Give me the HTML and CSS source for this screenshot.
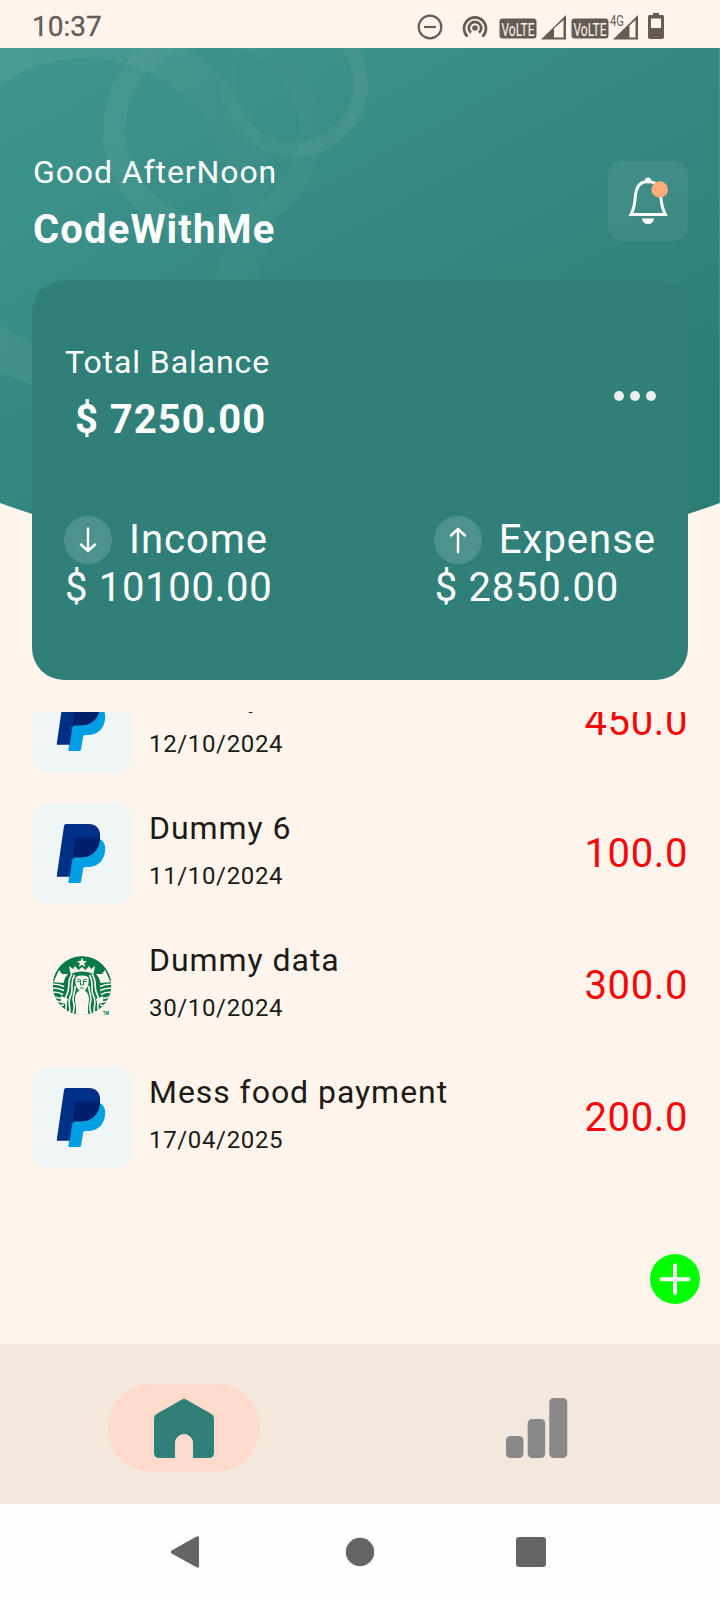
FILE: index.html
```html
<!DOCTYPE html>
<html lang="en">
<head>
<meta charset="utf-8">
<title>Expense Tracker</title>
<link rel="stylesheet" href="styles.css">
</head>
<body>
<svg width="0" height="0" class="defs">
  <symbol id="paypal" viewBox="0 0 100 100">
    <path fill="#009fe3" d="M68.500 35.500C72 37.500 74 42 73 48C71.500 57.500 65 63 56 63H53Q51.500 63 51.200 64.500L49 77.500Q48.800 79 47.500 79H37.300Q36.100 79 36.300 77.800L43 36Z"/>
    <path fill="#002f87" d="M34 20H56.500C65 20 69 25.500 68 34.500C67 46 60 53.300 49 53.300H43Q40.700 53.300 40.300 55.500L37.700 72.700H25.500Q24.600 72.700 24.800 71.500L32 22Q32.300 20 34 20Z"/>
    <path fill="#001f6b" d="M44.500 33.800H68.100C67.500 46 60 53.300 49 53.300H43Q40.700 53.300 40.300 55.500L43 36Q43.300 33.800 44.500 33.800Z"/>
  </symbol>
</svg>
<div class="phone">
  <header class="status">
    <span class="clock">10:37</span>
    <svg class="status-icons" width="260" height="48" viewBox="410 0 260 48">
      <g fill="none" stroke="#645c55" stroke-width="2.200">
        <circle cx="430" cy="27" r="11.300"/><path d="M424 27H436"/>
        <path stroke-width="2.700" d="M467.500 36.500A11 11 0 1 1 482.500 36.500M471 32.800A6.200 6.200 0 1 1 479 32.800"/>
      </g>
      <g fill="#645c55">
        <circle cx="475" cy="28" r="2.800"/>
        <rect x="499.500" y="18.500" width="37" height="20" rx="3"/>
        <rect x="571.500" y="18.500" width="37" height="20" rx="3"/>
        <path fill-rule="evenodd" d="M541 39.500L566 15V39.500ZM554 28.500V37.500H563.500V20Z"/>
        <path fill-rule="evenodd" d="M613 39.500L638 15V39.500ZM629.500 25.500V37.500H635.500V20Z"/>
        <path fill-rule="evenodd" d="M653 13H659V15H662.500Q664 15 664 16.500V37Q664 39 662 39H650Q648 39 648 37V16.500Q648 15 649.500 15H653ZM651 18.500V28H661V18.500Z"/>
      </g>
      <g class="volte"><text x="501.500" y="35.500" textLength="33" lengthAdjust="spacingAndGlyphs">VoLTE</text><text x="573.500" y="35.500" textLength="33" lengthAdjust="spacingAndGlyphs">VoLTE</text></g>
      <text class="net" x="610" y="26" textLength="14" lengthAdjust="spacingAndGlyphs">4G</text>
    </svg>
  </header>

  <main class="screen">
    <svg class="backdrop" width="720" height="540" viewBox="0 48 720 540">
      <defs>
        <linearGradient id="bg" gradientUnits="userSpaceOnUse" x1="150" y1="10" x2="440" y2="540"><stop offset="0" stop-color="#3f958e"/><stop offset="1" stop-color="#2c7d76"/></linearGradient>
        <linearGradient id="r1" gradientUnits="userSpaceOnUse" x1="0" y1="150" x2="270" y2="200"><stop offset="0" stop-color="#fff" stop-opacity=".055"/><stop offset="1" stop-color="#fff" stop-opacity=".012"/></linearGradient>
        <linearGradient id="r2" gradientUnits="userSpaceOnUse" x1="120" y1="190" x2="310" y2="90"><stop offset="0" stop-color="#fff" stop-opacity=".045"/><stop offset="1" stop-color="#fff" stop-opacity=".012"/></linearGradient>
        <linearGradient id="r3" gradientUnits="userSpaceOnUse" x1="360" y1="130" x2="225" y2="60"><stop offset="0" stop-color="#fff" stop-opacity=".06"/><stop offset="1" stop-color="#fff" stop-opacity=".005"/></linearGradient>
        <clipPath id="shape"><path d="M0 48H720V503Q360 633 0 503Z"/></clipPath>
      </defs>
      <g clip-path="url(#shape)">
        <path fill="url(#bg)" d="M0 48H720V600H0Z"/>
        <g fill="none">
          <circle cx="85" cy="205" r="167" stroke="url(#r1)" stroke-width="40"/>
          <circle cx="212" cy="130" r="98" stroke="url(#r2)" stroke-width="22"/>
          <circle cx="294" cy="83" r="66.500" stroke="url(#r3)" stroke-width="15"/>
        </g>
        <path fill="#fff" fill-opacity=".12" d="M719 48H720V504H719Z"/>
      </g>
    </svg>

    <section class="greeting">
      <div class="stack"><p class="label">Good AfterNoon</p><p class="strong name">CodeWithMe</p></div>
      <div class="bell">
        <svg width="80" height="80" viewBox="0 0 80 80">
          <g fill="none" stroke="#fff" stroke-width="3"><path d="M23 53.500C27 46 26.500 42 27.500 34C28.500 25 33 20.500 40 20.500S51.500 25 52.500 34C53.500 42 53.500 46 57.300 53.500Z"/></g>
          <circle cx="40" cy="19.500" r="3" fill="#fff"/>
          <path fill="#fff" d="M34 57.500H46C45.500 61 43.500 63 40 63S34.500 61 34 57.500Z"/>
          <circle cx="51.700" cy="28.500" r="8.300" fill="#ffab7b"/>
        </svg>
      </div>
    </section>

    <section class="card">
      <div class="balance">
        <div class="stack"><p class="label">Total Balance</p><p class="strong pre"> $ 7250.00</p></div>
        <div class="dots"><i></i><i></i><i></i></div>
      </div>
      <div class="totals">
        <div>
          <div class="kind income"><span class="round"><svg width="48" height="48" viewBox="0 0 48 48"><path d="M24 12.500V35M17 28.500L24 35L31 28.500"/></svg></span>Income</div>
          <p class="sum">$ 10100.00</p>
        </div>
        <div>
          <div class="kind"><span class="round"><svg width="48" height="48" viewBox="0 0 48 48"><path d="M24 36V13M17 19.500L24 13L31 19.500"/></svg></span>Expense</div>
          <p class="sum">$ 2850.00</p>
        </div>
      </div>
    </section>

    <section class="list">
      <div class="rows">
        <div class="row"><svg class="tile" width="100" height="100"><use href="#paypal"/></svg><div class="info"><p class="title">Dummy 5</p><p class="date">12/10/2024</p></div><span class="amount">450.0</span></div>
        <div class="row"><svg class="tile" width="100" height="100"><use href="#paypal"/></svg><div class="info"><p class="title">Dummy 6</p><p class="date">11/10/2024</p></div><span class="amount">100.0</span></div>
        <div class="row">
          <svg class="tile plain" width="100" height="100" viewBox="0 0 100 100">
            <defs><clipPath id="seal"><circle cx="50" cy="49.500" r="29.500"/></clipPath></defs>
            <g clip-path="url(#seal)">
              <circle cx="50" cy="49.500" r="29.500" fill="#0a7a48"/>
              <g fill="#fff5ed">
                <path d="M50 21.500L51.400 25H55L52.200 27.300L53.200 31L50 28.800L46.800 31L47.800 27.300L45 25H48.600Z"/>
                <path d="M37 30L41 33L43 30L46.500 34L50 31L53.500 34L57 30L59 33L63 30L61.500 38C55 34.500 45 34.500 38.500 38Z"/>
                <path d="M22 45L27 34L30 38H36L33 42L31.500 47L20 46ZM78 45L73 34L70 38H64L67 42L68.500 47L80 46Z"/>
                <path d="M43 80C45.500 73 43 68 43 63C43 58 46 54 50 53.500C54 54 57 58 57 63C57 68 54.500 73 57 80Z"/>
                <path d="M43.500 42C44 38.500 56 38.500 56.500 42C57.500 50 54 55 50 55.500C46 55 42.500 50 43.500 42Z"/>
                <path d="M29 60L36 63L34.500 68L29 67ZM71 60L64 63L65.500 68L71 67Z"/>
              </g>
              <g fill="none" stroke="#fff5ed" stroke-width="1.600">
                <path d="M42.500 39C37 48 42.500 53 38.500 60S40 71 37 80M40 38C34 47 39 51 35 58S37 70 32.500 78M43 50C44 56 39.500 60 41.500 66S41.500 73 40.500 80"/>
                <path d="M57.500 39C63 48 57.500 53 61.500 60S60 71 63 80M60 38C66 47 61 51 65 58S63 70 67.500 78M57 50C56 56 60.500 60 58.500 66S58.500 73 59.500 80"/>
                <path d="M20 48Q27 48 32 50.500M20 52Q27 52 32 54.500M21 56Q27 56 31 58.500M22 61L29 62.500M23 65L30 66M26 70L32 69M80 48Q73 48 68 50.500M80 52Q73 52 68 54.500M79 56Q73 56 69 58.500M78 61L71 62.500M77 65L70 66M74 70L68 69"/>
              </g>
              <path fill="none" stroke="#0a7a48" stroke-width=".9" d="M45 43.500Q47 42.500 48.500 44V49H51.500V44Q53 42.500 55 43.500M45 45.500H48M52 45.500H55M48 52H52"/>
            </g>
            <text class="tm" x="71" y="79" textLength="6" lengthAdjust="spacingAndGlyphs">TM</text>
          </svg>
          <div class="info"><p class="title">Dummy data</p><p class="date">30/10/2024</p></div><span class="amount">300.0</span>
        </div>
        <div class="row"><svg class="tile" width="100" height="100"><use href="#paypal"/></svg><div class="info"><p class="title">Mess food payment</p><p class="date">17/04/2025</p></div><span class="amount">200.0</span></div>
      </div>
    </section>
    <svg class="fab" width="50" height="50" viewBox="0 0 50 50"><circle cx="25" cy="25" r="25" fill="#0f0"/><path d="M25 11.500V39M11.500 25.300H38.500" stroke="#fff" stroke-width="4" stroke-linecap="round"/></svg>
  </main>

  <nav class="tabs">
    <div class="tab active"><svg width="60" height="60" viewBox="0 0 60 60"><path fill="#307f79" d="M28 1.500Q30 .2 32 1.500L57.500 16Q60 17.500 60 20.500V54.500Q60 60 54.500 60H39V45A9 9 0 0 0 21 45V60H5.500Q0 60 0 54.500V20.500Q0 17.500 2.500 16Z"/></svg></div>
    <div class="tab chart"><svg width="62" height="60" viewBox="0 0 62 60" fill="#898989"><rect y="38" width="17.500" height="22" rx="4.500"/><rect x="21.700" y="21" width="17.500" height="39" rx="4.500"/><rect x="43.300" width="18" height="60" rx="4.500"/></svg></div>
  </nav>
  <footer class="system">
    <svg width="720" height="96" viewBox="0 1504 720 96" fill="#656565"><path d="M171.600 1550.500L196.500 1536.500Q199 1535.300 199 1538V1566Q199 1568.500 196.500 1567.300L171.600 1553.500Q170 1552 171.600 1550.500Z"/><circle cx="360" cy="1552" r="14.200"/><rect x="516" y="1537" width="30" height="30" rx="3"/></svg>
  </footer>
</div>
</body>
</html>
```

FILE: styles.css
```css
* { box-sizing: border-box; }
body { margin: 0; font-family: Roboto, sans-serif; letter-spacing: 1px; color: #201a17; background: #fff5ed; }
p { margin: 0; }
svg { display: block; }
.defs { position: absolute; }
.phone { width: 720px; height: 1600px; display: flex; flex-direction: column; overflow: hidden; }
.status { height: 48px; padding-left: 32px; padding-right: 50px; display: flex; justify-content: space-between; align-items: center; color: #645c55; }
.clock { font-size: 28px; letter-spacing: 0; line-height: 54px; padding-top: 6px; -webkit-text-stroke: .3px #645c55; }
.volte { fill: #fff5ed; font-size: 18px; letter-spacing: 0; }
.net { fill: #645c55; font-size: 14px; letter-spacing: 0; }

.screen { position: relative; height: 1296px; display: flex; flex-direction: column; }
.backdrop { position: absolute; top: 0; left: 0; z-index: -1; }
.greeting { height: 232px; padding: 100px 32px 0 33px; display: flex; justify-content: space-between; color: #fff; }
.stack { display: flex; flex-direction: column; gap: 10px; }
.label { font-size: 32px; line-height: 48px; letter-spacing: .9px; }
.strong { font-size: 40px; line-height: 48px; font-weight: 700; }
.name { letter-spacing: 1.15px; }
.pre { white-space: pre; margin-left: -1px; }
.bell { width: 80px; height: 80px; margin-top: 13px; border-radius: 14px; background: rgba(255,255,255,.06); }

.card { height: 400px; margin: 0 32px; padding: 58px 32px 0; border-radius: 32px; background: #307f79; color: #fff; }
.balance { display: flex; justify-content: space-between; padding-left: 1px; }
.dots { display: flex; gap: 6px; padding-top: 53px; }
.dots i { width: 10px; height: 10px; border-radius: 50%; background: #eee; }
.totals { display: flex; justify-content: space-between; margin-top: 72px; font-size: 40px; line-height: 48px; }
.kind { display: flex; gap: 17px; }
.sum { letter-spacing: .7px; padding-left: 1px; }
.round { width: 48px; height: 48px; border-radius: 50%; background: rgba(255,255,255,.15); }
.round path { fill: none; stroke: #fff; stroke-width: 2.4; stroke-linecap: round; stroke-linejoin: round; }

.list { height: 632px; margin-top: 32px; overflow: hidden; }
.rows { display: flex; flex-direction: column; gap: 32px; margin-top: -40px; padding: 0 32px; }
.row { display: flex; align-items: center; height: 100px; }
.tile { border-radius: 16px; background: #f0f6f5; }
.plain { background: none; }
.tm { font-size: 5px; font-weight: 700; letter-spacing: 0; fill: #00754a; }
.info { flex: 1; padding-left: 17px; height: 100px; }
.title { font-size: 32px; line-height: 48px; letter-spacing: .95px; }
.date { font-size: 24px; line-height: 48px; letter-spacing: .65px; }
.amount { font-size: 40px; line-height: 48px; letter-spacing: .6px; color: #f80606; }
.fab { position: absolute; right: 20px; bottom: 40px; }

.tabs { height: 160px; padding: 0 108px; display: flex; justify-content: space-between; align-items: center; background: #f4e7dc; }
.tab { width: 152px; height: 88px; padding-top: 14px; margin-top: 8px; border-radius: 44px; display: flex; justify-content: center; }
.chart { padding-left: 2px; }
.active { background: #ffdbcb; }
.system { height: 96px; background: #fffdfb; }
```
